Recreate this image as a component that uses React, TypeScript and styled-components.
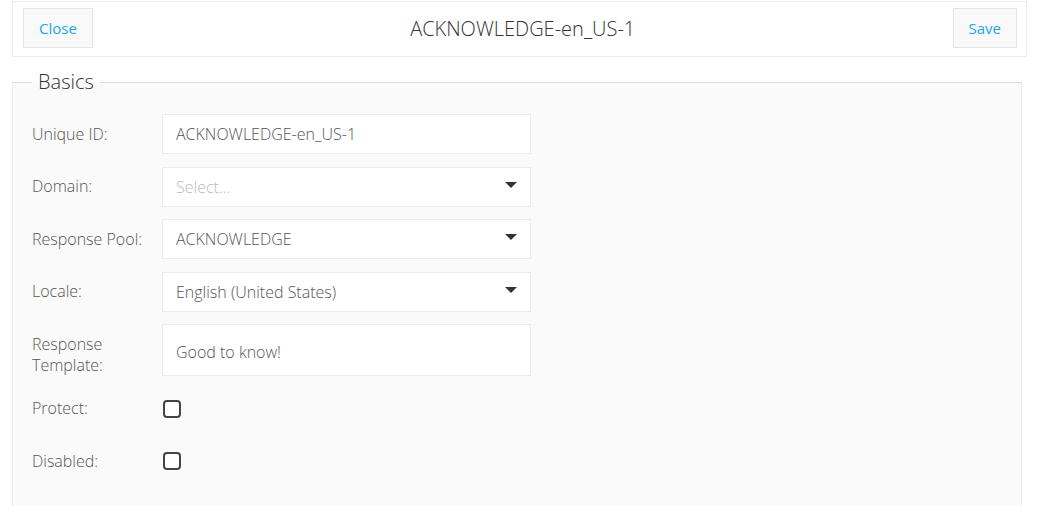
import React from "react";
import styled, { createGlobalStyle } from "styled-components";

const GlobalStyle = createGlobalStyle`
  html, body {
    margin: 0;
    padding: 0;
    background: #ffffff;
  }
  body {
    font-family: "Open Sans", "Liberation Sans", sans-serif;
    font-weight: 300;
    color: #555;
  }
  * { box-sizing: border-box; }
`;

const Page = styled.div`
  padding: 1px 0 10px 12px;
`;

const Header = styled.header`
  display: flex;
  align-items: flex-start;
  justify-content: space-between;
  width: 1015px;
  height: 56px;
  padding: 6px 9px 0 10px;
  border: 1px solid #ececec;
  background: #fff;
`;

const HeaderButton = styled.button`
  height: 40px;
  padding: 0 15px;
  border: 1px solid #e4e4e4;
  background: #f9f9f9;
  color: #1ea7ea;
  font-family: "Open Sans", "Liberation Sans", sans-serif;
  font-weight: 400;
  font-size: 15px;
  cursor: pointer;
`;

const Title = styled.h1`
  margin: 0;
  font-size: 20px;
  line-height: 42px;
  font-weight: 300;
  color: #333;
`;

const Fieldset = styled.fieldset`
  width: 1010px;
  margin: 13px 0 0 0;
  padding: 0;
  border: 1px solid #ececec;
  border-top-color: #dcdcdc;
  border-bottom: none;
  background: #fafafa;
  min-width: 0;
`;

const Legend = styled.legend`
  margin-left: 19px;
  padding: 0 6px;
  font-size: 20px;
  font-weight: 300;
  color: #333;
  line-height: 24px;
`;

const Form = styled.div`
  display: grid;
  grid-template-columns: 130px 369px;
  row-gap: 12.5px;
  padding: 20px 0 25px 19px;
`;

const Label = styled.label`
  display: block;
  padding-top: 9.5px;
  font-size: 16px;
  line-height: 21px;
  color: #555;
`;

const Field = styled.div<{ $tall?: boolean }>`
  position: relative;
  display: flex;
  align-items: center;
  height: ${(p) => (p.$tall ? "52px" : "40px")};
  padding: ${(p) => (p.$tall ? "3px 13px 0" : "0 13px")};
  border: 1px solid #ececec;
  background: #fff;
  font-size: 16px;
  color: #555;
`;

const Placeholder = styled.span`
  color: #bbb;
`;

const Arrow = styled.span`
  position: absolute;
  right: 13px;
  top: 50%;
  margin-top: -5px;
  width: 0;
  height: 0;
  border-left: 6px solid transparent;
  border-right: 6px solid transparent;
  border-top: 6px solid #333;
`;

const CheckCell = styled.div`
  display: flex;
  align-items: center;
  height: 40px;
  padding-left: 1px;
`;

const Checkbox = styled.span`
  display: inline-block;
  width: 18px;
  height: 18px;
  border: 2px solid #444;
  border-radius: 4px;
  background: #fff;
`;

export default function App() {
  return (
    <>
      <GlobalStyle />
      <Page>
        <Header>
          <HeaderButton>Close</HeaderButton>
          <Title>ACKNOWLEDGE-en_US-1</Title>
          <HeaderButton>Save</HeaderButton>
        </Header>
        <Fieldset>
          <Legend>Basics</Legend>
          <Form>
            <Label>Unique ID:</Label>
            <Field>ACKNOWLEDGE-en_US-1</Field>

            <Label>Domain:</Label>
            <Field>
              <Placeholder>Select...</Placeholder>
              <Arrow />
            </Field>

            <Label>Response Pool:</Label>
            <Field>
              ACKNOWLEDGE
              <Arrow />
            </Field>

            <Label>Locale:</Label>
            <Field>
              English (United States)
              <Arrow />
            </Field>

            <Label>
              Response
              <br />
              Template:
            </Label>
            <Field $tall>Good to know!</Field>

            <Label>Protect:</Label>
            <CheckCell>
              <Checkbox />
            </CheckCell>

            <Label>Disabled:</Label>
            <CheckCell>
              <Checkbox />
            </CheckCell>
          </Form>
        </Fieldset>
      </Page>
    </>
  );
}
